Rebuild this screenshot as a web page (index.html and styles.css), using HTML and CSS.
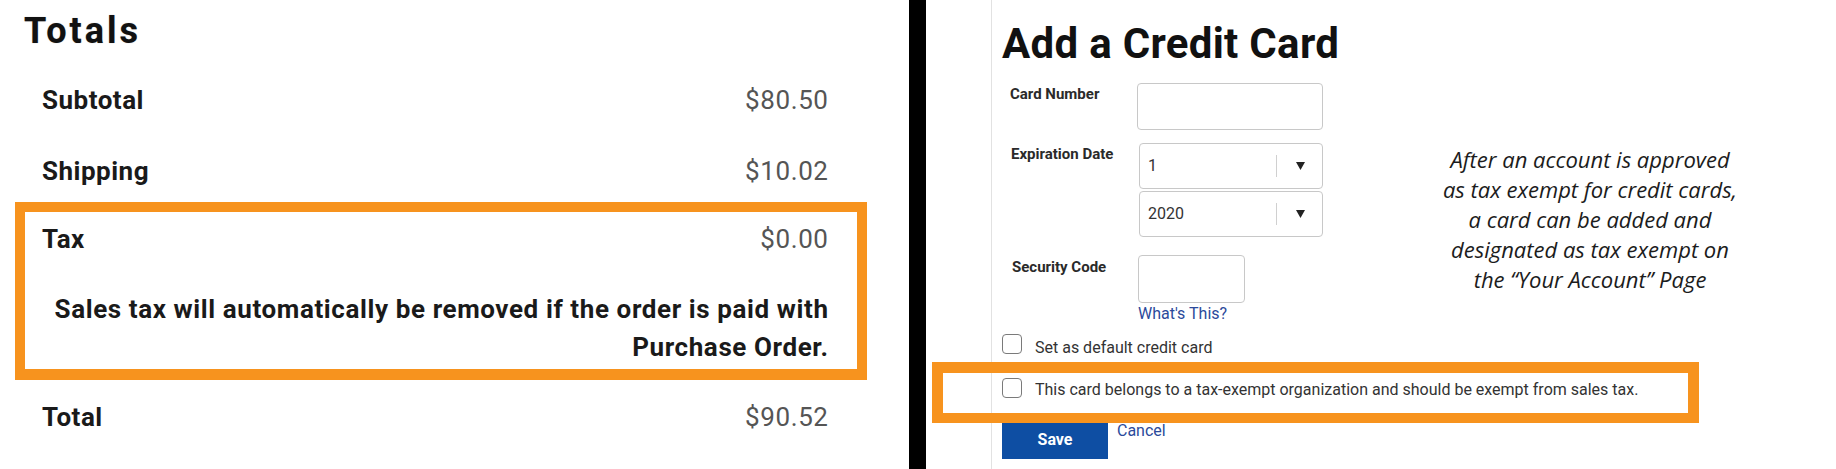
FILE: index.html
```html
<!DOCTYPE html>
<html lang="en">
<head>
<meta charset="utf-8">
<title>Totals and Add a Credit Card</title>
<link rel="stylesheet" href="styles.css">
</head>
<body>
<div class="page">
  <section class="totals">
    <h1 class="totals-title">Totals</h1>
    <div class="totals-list">
      <div class="row"><span class="label">Subtotal</span><span class="value">$80.50</span></div>
      <div class="row row-shipping"><span class="label">Shipping</span><span class="value">$10.02</span></div>
      <div class="tax-box">
        <div class="row row-tax"><span class="label">Tax</span><span class="value">$0.00</span></div>
        <p class="tax-note">Sales tax will automatically be removed if the order is paid with Purchase Order.</p>
      </div>
      <div class="row row-total"><span class="label">Total</span><span class="value">$90.52</span></div>
    </div>
  </section>
  <div class="divider"></div>
  <section class="card-side">
    <div class="card-form">
      <h2 class="card-title">Add a Credit Card</h2>
      <div class="field field-number">
        <span class="field-label">Card Number</span>
        <div class="input input-wide"></div>
      </div>
      <div class="field field-exp">
        <span class="field-label">Expiration Date</span>
        <div class="selects">
          <div class="select"><span class="select-value">1</span><span class="select-sep"></span><svg class="select-arrow" width="9" height="8" viewBox="0 0 9 8"><path d="M0 0H9L4.5 8Z" fill="#222"/></svg></div>
          <div class="select"><span class="select-value">2020</span><span class="select-sep"></span><svg class="select-arrow" width="9" height="8" viewBox="0 0 9 8"><path d="M0 0H9L4.5 8Z" fill="#222"/></svg></div>
        </div>
      </div>
      <div class="field field-code">
        <span class="field-label">Security Code</span>
        <div class="code-col">
          <div class="input input-short"></div>
          <a class="link whats" href="#">What's This?</a>
        </div>
      </div>
      <div class="check-row check-default"><span class="checkbox"></span><span class="check-text">Set as default credit card</span></div>
      <div class="check-row check-exempt"><span class="checkbox"></span><span class="check-text">This card belongs to a tax-exempt organization and should be exempt from sales tax.</span></div>
      <div class="actions"><button class="save" type="button">Save</button><a class="link cancel" href="#">Cancel</a></div>
    </div>
    <p class="note">After an account is approved<br>as tax exempt for credit cards,<br>a card can be added and<br>designated as tax exempt on<br>the “Your Account” Page</p>
    <div class="highlight"></div>
  </section>
</div>
</body>
</html>
```
FILE: styles.css
```css
html, body {
  margin: 0;
  padding: 0;
  background: #fff;
}
body {
  width: 1836px;
  height: 469px;
  overflow: hidden;
  font-family: Roboto, "Liberation Sans", Arial, sans-serif;
}
.page {
  display: flex;
  height: 469px;
}

/* ---------- left: totals ---------- */
.totals {
  width: 909px;
  flex: none;
}
.totals-title {
  margin: 11px 0 34px 24px;
  font-size: 36px;
  line-height: 40px;
  font-weight: 700;
  letter-spacing: 3px;
  color: #111;
  text-shadow: 0 0 1px rgba(0,0,0,0.35);
}
.totals-list {
  margin-left: 15px;
  width: 852px;
}
.row {
  display: flex;
  justify-content: space-between;
  padding: 0 39px 0 27px;
  font-size: 26px;
  line-height: 30px;
}
.label {
  font-weight: 700;
  letter-spacing: 0.5px;
  color: #1a1a1a;
}
.value {
  font-weight: 400;
  letter-spacing: 0.6px;
  margin-right: -0.6px;
  color: #555;
}
.row-shipping {
  margin-top: 41px;
}
.tax-box {
  margin-top: 16px;
  border: 10px solid #f7931e;
  border-bottom-width: 11px;
  padding: 12px 29px 3px 17px;
}
.tax-box .row {
  padding: 0;
}
.tax-note {
  margin: 36px -0.6px 0 0;
  text-align: right;
  font-size: 26px;
  line-height: 38px;
  font-weight: 700;
  letter-spacing: 0.6px;
  color: #1a1a1a;
}
.row-total {
  margin-top: 22px;
}

/* ---------- divider ---------- */
.divider {
  width: 17px;
  flex: none;
  background: #000;
}

/* ---------- right: card form ---------- */
.card-side {
  flex: 1;
  display: flex;
  position: relative;
}
.card-form {
  margin-left: 65px;
  border-left: 1px solid #e2e2e2;
  padding-left: 10px;
  width: 418px;
  flex: none;
}
.card-title {
  margin: 20px 0 15px;
  font-size: 42px;
  line-height: 48px;
  font-weight: 700;
  letter-spacing: 0.3px;
  color: #111;
}
.field {
  display: grid;
  grid-template-columns: 135px auto;
  align-items: start;
}
.field-label {
  padding: 2px 0 0 8px;
  font-size: 15px;
  line-height: 18px;
  font-weight: 700;
  color: #2a2a2a;
}
.field-exp {
  margin-top: 13px;
}
.field-exp .field-label {
  padding-left: 9px;
}
.field-code {
  margin-top: 18px;
}
.field-code .field-label {
  padding: 3px 0 0 10px;
}
.input {
  box-sizing: border-box;
  border: 1px solid #c8c8c8;
  border-radius: 4px;
  background: #fff;
}
.input-wide {
  width: 186px;
  height: 47px;
}
.selects {
  display: flex;
  flex-direction: column;
  gap: 2px;
  padding-left: 2px;
}
.select {
  box-sizing: border-box;
  width: 184px;
  height: 46px;
  border: 1px solid #c8c8c8;
  border-radius: 4px;
  display: flex;
  align-items: center;
  padding-left: 8px;
}
.select-value {
  flex: 1;
  font-size: 16px;
  line-height: 18px;
  color: #333;
}
.select-sep {
  width: 1px;
  height: 22px;
  background: #d0d0d0;
}
.select-arrow {
  margin: 0 17px 0 19px;
}
.code-col {
  display: flex;
  flex-direction: column;
  align-items: flex-start;
  padding-left: 1px;
}
.input-short {
  width: 107px;
  height: 48px;
}
.link {
  color: #2b4a9b;
  text-decoration: none;
  font-size: 16px;
  line-height: 18px;
}
.whats {
  margin-top: 2px;
}
.check-row {
  display: flex;
  align-items: flex-start;
  gap: 13px;
}
.check-default {
  margin-top: 11px;
}
.check-exempt {
  margin-top: 20px;
}
.checkbox {
  box-sizing: border-box;
  width: 20px;
  height: 20px;
  border: 1.5px solid #7a7a7a;
  border-radius: 4px;
  background: #fff;
  flex: none;
}
.check-text {
  padding-top: 4px;
  font-size: 16px;
  line-height: 20px;
  color: #333;
  white-space: nowrap;
}
.check-exempt .check-text {
  padding-top: 2px;
}
.actions {
  display: flex;
  align-items: flex-start;
  margin-top: 20px;
}
.save {
  width: 106px;
  height: 39px;
  border: 0;
  padding: 0;
  background: #0e4ea3;
  color: #fff;
  font-family: Roboto, "Liberation Sans", Arial, sans-serif;
  font-size: 16px;
  line-height: 39px;
  font-weight: 700;
}
.cancel {
  margin-left: 9px;
  margin-top: 2px;
}
.note {
  margin: 144px 0 0;
  width: 340px;
  text-align: center;
  font-family: "Open Sans", "Noto Sans", sans-serif;
  font-style: italic;
  font-size: 22px;
  line-height: 30px;
  color: #1c1c1c;
}
.highlight {
  position: absolute;
  left: 6px;
  top: 362px;
  width: 767px;
  height: 61px;
  box-sizing: border-box;
  border: 11px solid #f7931e;
  border-bottom-width: 10px;
  pointer-events: none;
}
```
